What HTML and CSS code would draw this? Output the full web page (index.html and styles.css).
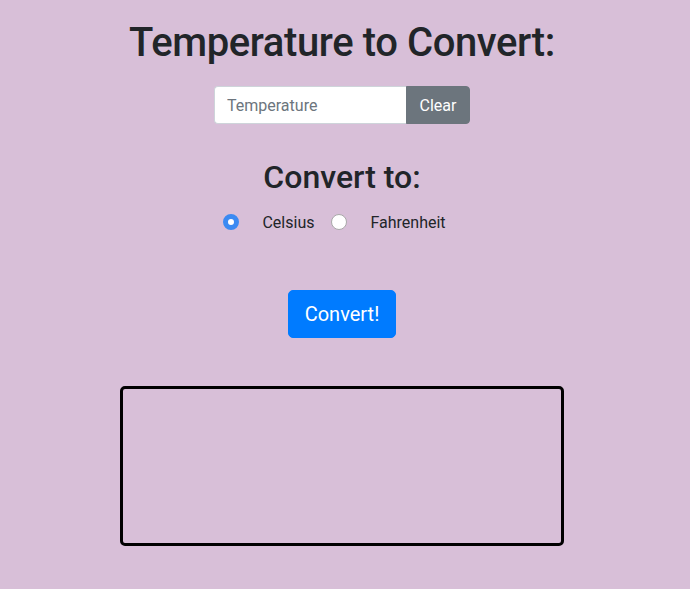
FILE: index.html
```html
<!DOCTYPE html>
<html lang="en">
<head>
<meta charset="utf-8">
<title>Temperature Converter</title>
<link rel="stylesheet" href="styles.css">
</head>
<body>
<main class="app">
  <h1 class="title">Temperature to Convert:</h1>
  <div class="input-group">
    <input class="temp-input" type="text" placeholder="Temperature">
    <button class="btn-clear" type="button">Clear</button>
  </div>
  <h2 class="subtitle">Convert to:</h2>
  <div class="radios">
    <label class="radio-item"><input class="radio" type="radio" name="unit" checked><span class="radio-label">Celsius</span></label>
    <label class="radio-item"><input class="radio" type="radio" name="unit"><span class="radio-label">Fahrenheit</span></label>
  </div>
  <button class="btn-convert" type="button">Convert!</button>
  <div class="output"></div>
</main>
</body>
</html>
```

FILE: styles.css
```css
html, body {
  margin: 0;
  padding: 0;
  background: #d8bfd8;
  font-family: Roboto, "Liberation Sans", Arial, sans-serif;
  color: #212529;
}

.app {
  display: flex;
  flex-direction: column;
  align-items: center;
  padding-top: 19px;
  padding-right: 6px;
}

.title {
  margin: 0;
  font-size: 40px;
  font-weight: 500;
  line-height: 48px;
  letter-spacing: -0.4px;
}

.input-group {
  display: flex;
  margin-top: 19px;
  height: 38px;
}

.temp-input {
  box-sizing: border-box;
  width: 192px;
  height: 38px;
  border: 1px solid #ced4da;
  border-right: none;
  border-radius: 4px 0 0 4px;
  padding: 6px 12px;
  font-family: inherit;
  font-size: 16px;
  color: #495057;
  background: #fff;
  outline: none;
}

.temp-input::placeholder {
  color: #6c757d;
}

.btn-clear {
  box-sizing: border-box;
  width: 64px;
  height: 38px;
  border: 1px solid #6c757d;
  border-radius: 0 4px 4px 0;
  background: #6c757d;
  color: #fff;
  font-family: inherit;
  font-size: 16px;
  padding: 6px 12px;
}

.subtitle {
  margin: 34px 0 0;
  font-size: 32px;
  font-weight: 500;
  line-height: 38px;
}

.radios {
  display: flex;
  align-items: center;
  margin-top: 14px;
  height: 24px;
  padding-right: 15px;
}

.radio-item {
  display: flex;
  align-items: center;
  margin-right: 17px;
  font-size: 16px;
}

.radio-item:last-child {
  margin-right: 0;
}

.radio {
  appearance: none;
  -webkit-appearance: none;
  box-sizing: border-box;
  width: 16px;
  height: 16px;
  margin: 0 23px 0 0;
  border-radius: 50%;
  border: 1px solid #a9a9a9;
  background: #fff;
}

.radio:checked {
  border: 5px solid #3b8af2;
  background: #fff;
}

.btn-convert {
  box-sizing: border-box;
  margin-top: 56px;
  height: 48px;
  padding: 8px 16px;
  border: 1px solid #007bff;
  border-radius: 5px;
  background: #007bff;
  color: #fff;
  font-family: inherit;
  font-size: 20px;
  line-height: 30px;
}

.output {
  box-sizing: border-box;
  margin-top: 48px;
  width: 444px;
  height: 160px;
  border: 3px solid #000;
  border-radius: 5px;
}
```
